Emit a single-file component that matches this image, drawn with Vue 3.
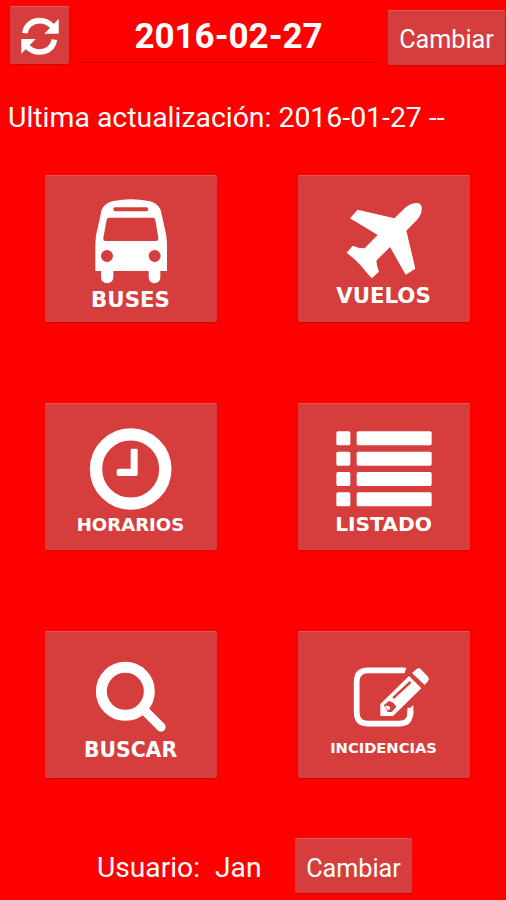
<template>
  <div class="screen">
    <header class="top-bar">
      <button class="btn refresh" aria-label="Actualizar">
        <svg viewBox="30 18 177 174" class="refresh-icon">
          <path d="M75 100 C77 76 97 62 119 62 C134 62 147 68 157 79" class="arc" />
          <path d="M176 57 V101 H133 Z" />
          <path d="M163 119 C160 143 141 156 119 156 C104 156 91 150 81 139" class="arc" />
          <path d="M64 161 V117 H107 Z" />
        </svg>
      </button>
      <div class="date-field">{{ date }}</div>
      <button class="btn change">Cambiar</button>
    </header>

    <p class="updated">Ultima actualización: {{ lastUpdate }} --</p>

    <main class="menu">
      <button class="btn tile buses">
        <svg viewBox="30 30 516 339">
          <path
            fill-rule="evenodd"
            d="M198 143 C201 126 212 114 235 108 Q288 98 341 108 C365 114 376 126 379 143 L389 190
            Q396 212 396 245 V318 H376 V337 A17.500 18 0 0 1 341 337 V318 H235 V337 A18.500 18 0 0 1 198 337
            V318 H181 V245 Q181 212 188 190 Z
            M241 127 A6 6 0 0 0 241 139 H334 A6 6 0 0 0 334 127 Z
            M222 158 Q216 158 215 164 L205 219 Q204 228 212 228 H363 Q371 228 370 219 L361 164 Q360 158 354 158 Z
            M234 273 A18 18 0 1 0 198 273 A18 18 0 1 0 234 273 Z
            M377 273 A18 18 0 1 0 341 273 A18 18 0 1 0 377 273 Z"
          />
        </svg>
        <span>BUSES</span>
      </button>

      <button class="btn tile vuelos">
        <svg viewBox="30 30 516 327">
          <path
            d="M319 160 L351 129 Q371 112 390 114 Q403 117 401 135 Q400 150 386 166 L355 197
            L382 311 L353 329 L306 246 L266 286 Q264 298 273 320 L252 339 Q244 334 222 305
            Q203 284 176 263 L194 242 Q212 250 230 250 L269 210 L186 160 L209 134 Z"
          />
        </svg>
        <span>VUELOS</span>
      </button>

      <button class="btn tile horarios">
        <svg viewBox="30 24 516 328.500">
          <circle cx="287" cy="222" r="104" fill="none" stroke="#fff" stroke-width="37" />
          <path d="M290 161 H304 Q308 161 308 165 V238 Q308 243 303 243 H251 Q245 243 245 237 V227 Q245 221 251 221 H287 V165 Q287 161 290 161 Z" />
        </svg>
        <span>HORARIOS</span>
      </button>

      <button class="btn tile listado">
        <svg viewBox="30 24 516 327">
          <template v-for="y in rows" :key="y">
            <rect x="145" :y="y" width="42" height="42" rx="5" />
            <rect x="206" :y="y" width="225" height="42" rx="5" />
          </template>
        </svg>
        <span>LISTADO</span>
      </button>

      <button class="btn tile buscar">
        <svg viewBox="30 27 516 321">
          <circle cx="271" cy="208" r="72" fill="none" stroke="#fff" stroke-width="33" />
          <path d="M324 261 L378 315" stroke="#fff" stroke-width="28" stroke-linecap="round" />
        </svg>
        <span>BUSCAR</span>
      </button>

      <button class="btn tile incidencias">
        <svg viewBox="30 27 516 315">
          <path
            d="M348 145 H240 Q206 145 206 179 V271 Q206 305 240 305 H334 Q367 305 367 271 V257"
            fill="none"
            stroke="#fff"
            stroke-width="17"
          />
          <path d="M355 137 L350 153 H340 V137 Z" />
          <path d="M376 249 L358 267 V280 H376 Z" />
          <path d="M385 142 Q391 136 398 141 L420 164 Q425 170 420 177 L410 189 L372 153 Z" />
          <path
            fill-rule="evenodd"
            d="M363 162 L400 199 L315 282 H277 V246 Z
            M365 177 L313 226 L318 231 L370 183 Z
            M303 237 L287 250 L294 257 L299 270 L311 270 L325 254 L316 242 Z"
          />
          <path d="M292 250 L307 254 L304 264 L298 263 Z" />
        </svg>
        <span>INCIDENCIAS</span>
      </button>
    </main>

    <footer class="user-bar">
      <span class="user-label">Usuario:</span>
      <span class="user-name">{{ user }}</span>
      <button class="btn change">Cambiar</button>
    </footer>
  </div>
</template>

<script setup>
import { ref } from 'vue'

const date = ref('2016-02-27')
const lastUpdate = ref('2016-01-27')
const user = ref('Jan')

// top edge of each line in the list icon
const rows = [109, 170, 231, 292]
</script>

<style>
body {
  margin: 0;
  background: #ff0000;
}
</style>

<style scoped>
.screen {
  box-sizing: border-box;
  width: 506px;
  height: 900px;
  overflow: hidden;
  background: #ff0000;
  color: #fff;
  font-family: Roboto, sans-serif;
  display: flex;
  flex-direction: column;
}

.btn {
  box-sizing: border-box;
  margin: 0;
  padding: 0;
  border: 0;
  border-radius: 2px;
  background: #d63e3e;
  color: #fff;
  font-family: inherit;
  box-shadow: inset 0 1px 0 #e25858, 0 1px 1px #c80808;
}

.top-bar {
  display: flex;
  align-items: flex-start;
  height: 66px;
}

.refresh {
  width: 59px;
  height: 58px;
  margin: 6px 0 0 10px;
}

.refresh-icon {
  display: block;
  width: 59px;
  height: 58px;
  fill: #fff;
}

.arc {
  fill: none;
  stroke: #fff;
  stroke-width: 17;
}

.date-field {
  box-sizing: border-box;
  width: 297px;
  height: 63px;
  margin-left: 11px;
  padding-top: 16px;
  border-bottom: 1px solid #d00000;
  font-size: 35px;
  font-weight: 700;
  line-height: 41px;
  text-align: center;
}

.change {
  width: 117px;
  height: 55px;
  padding-top: 4px;
  font-size: 25.2px;
  line-height: 51px;
}

.top-bar .change {
  margin: 10px 0 0 11px;
}

.updated {
  margin: 35px 0 0 8px;
  font-size: 28.4px;
  line-height: 34px;
  white-space: nowrap;
}

.menu {
  display: grid;
  grid-template-columns: 172px 172px;
  grid-auto-rows: 147px;
  gap: 81px;
  margin: 40px 0 0 45px;
}

.tile {
  display: flex;
  flex-direction: column;
  align-items: center;
  font-family: 'DejaVu Sans', sans-serif;
  font-weight: 700;
  line-height: 24px;
}

.tile svg {
  flex: none;
  width: 172px;
  fill: #fff;
}

.tile span {
  margin-right: 1px;
}

.buses {
  font-size: 21.3px;
}

.vuelos {
  font-size: 21.3px;
}

.horarios {
  font-size: 18.1px;
}

.listado {
  font-size: 20.2px;
}

.buscar {
  font-size: 20.4px;
}

.incidencias {
  font-size: 14.7px;
}

.user-bar {
  display: flex;
  align-items: flex-start;
  margin: 60px 0 0 97px;
  font-size: 28.2px;
  line-height: 60px;
}

.user-label {
  width: 118px;
}

.user-name {
  width: 80px;
}

.user-bar .change {
  padding-top: 6px;
  line-height: 49px;
}
</style>
